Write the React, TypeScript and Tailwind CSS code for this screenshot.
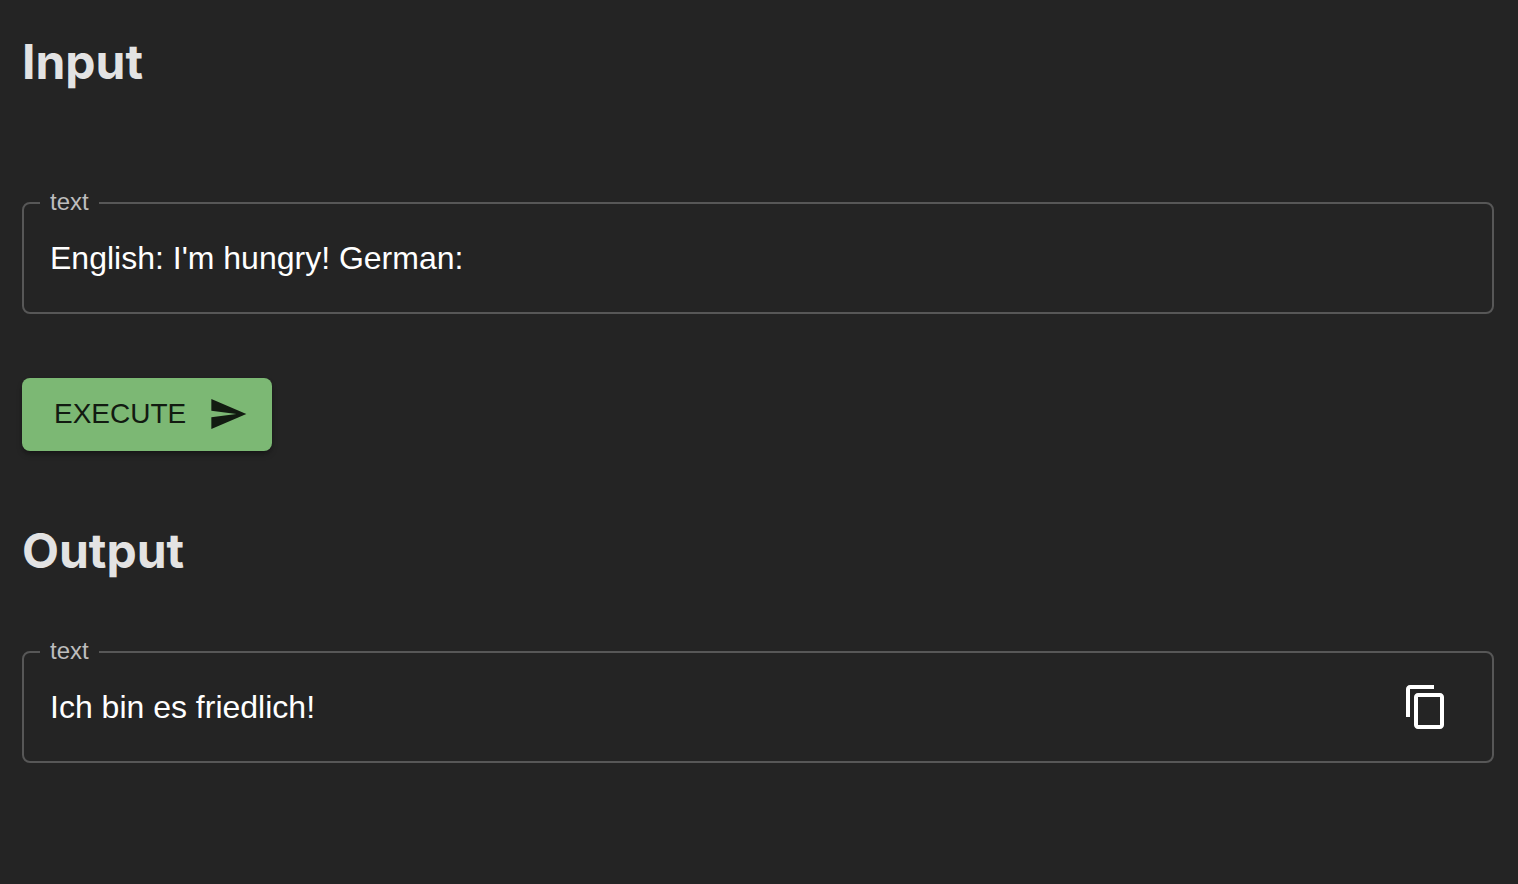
import { useState } from "react";
import type { ReactNode } from "react";

type FieldProps = {
  id: string;
  label: string;
  value: string;
  onChange?: (value: string) => void;
  action?: ReactNode;
};

function OutlinedField({ id, label, value, onChange, action }: FieldProps) {
  return (
    <fieldset className="w-full rounded-lg border-2 border-[#575757] px-4 pb-[11px]">
      <legend className="h-6 px-[10px] text-2xl text-[#bdbdbd]">
        <label htmlFor={id} className="block leading-[22px]">
          {label}
        </label>
      </legend>
      <div className="flex items-center pl-[10px] pr-[22px]">
        <input
          id={id}
          type="text"
          value={value}
          readOnly={!onChange}
          onChange={(event) => onChange?.(event.target.value)}
          className="h-[86px] min-w-0 flex-1 bg-transparent text-[32px] text-white outline-none"
        />
        {action}
      </div>
    </fieldset>
  );
}

function SendIcon() {
  return (
    <svg viewBox="0 0 24 24" className="size-10" fill="currentColor" aria-hidden="true">
      <path d="M2.01 21 23 12 2.01 3 2 10l15 2-15 2z" />
    </svg>
  );
}

function CopyIcon() {
  return (
    <svg viewBox="0 0 24 24" className="size-12" fill="currentColor" aria-hidden="true">
      <path d="M16 1H4c-1.100 0-2 .9-2 2v14h2V3h12V1zm3 4H8c-1.100 0-2 .9-2 2v14c0 1.100.9 2 2 2h11c1.100 0 2-.9 2-2V7c0-1.100-.9-2-2-2zm0 16H8V7h11v14z" />
    </svg>
  );
}

export default function App() {
  const [text, setText] = useState("English: I'm hungry! German:");
  const output = "Ich bin es friedlich!";

  return (
    <main className="min-h-screen bg-[#242424] px-[22px] pt-8 pr-6 font-['Liberation_Sans',Arial,sans-serif]">
      <section>
        <h2 className="font-[Inter,sans-serif] text-5xl leading-[60px] font-bold text-[#e3e3e3] [font-optical-sizing:none]">
          Input
        </h2>
        <div className="mt-[99px]">
          <OutlinedField id="input-text" label="text" value={text} onChange={setText} />
        </div>
        <button
          type="button"
          className="mt-16 flex h-[73px] items-center gap-[22px] rounded-lg bg-[#7cb874] pr-6 pb-px pl-8 text-[28px] text-[#121b11] shadow-md shadow-black/30"
        >
          EXECUTE
          <SendIcon />
        </button>
      </section>
      <section className="mt-[70px]">
        <h2 className="font-[Inter,sans-serif] text-5xl leading-[60px] font-bold text-[#e3e3e3] [font-optical-sizing:none]">
          Output
        </h2>
        <div className="mt-[59px]">
          <OutlinedField
            id="output-text"
            label="text"
            value={output}
            action={
              <button
                type="button"
                aria-label="Copy"
                onClick={() => navigator.clipboard?.writeText(output)}
                className="p-1 text-white"
              >
                <CopyIcon />
              </button>
            }
          />
        </div>
      </section>
    </main>
  );
}
